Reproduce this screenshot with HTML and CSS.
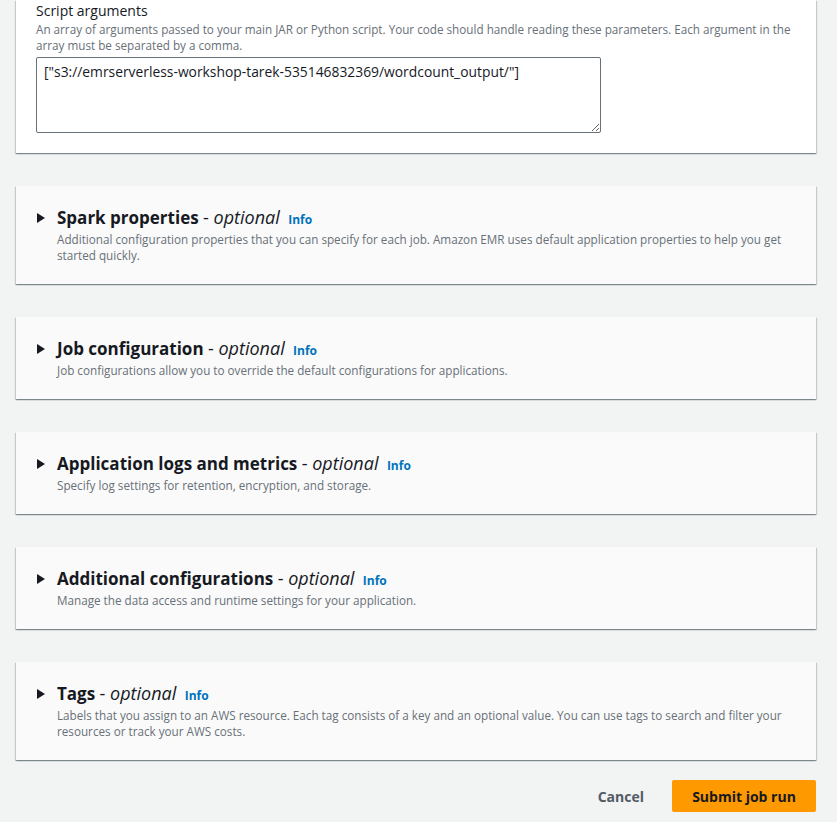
FILE: index.html
```html
<!DOCTYPE html>
<html lang="en">
<head>
<meta charset="utf-8">
<title>Submit job run</title>
<link rel="stylesheet" href="styles.css">
</head>
<body>
<main class="page">
  <section class="card card-open">
    <div class="field-label">Script arguments</div>
    <div class="field-desc">An array of arguments passed to your main JAR or Python script. Your code should handle reading these parameters. Each argument in the array must be separated by a comma.</div>
    <textarea class="textarea">["s3://emrserverless-workshop-tarek-535146832369/wordcount_output/"]</textarea>
  </section>

  <section class="card card-collapsed">
    <div class="exp-head">
      <span class="caret"><svg width="10" height="12" viewBox="0 0 10 12"><path d="M1 1 L9 6 L1 11 Z" fill="#16191f"/></svg></span>
      <div class="exp-text">
        <h2 class="exp-title">Spark properties <span class="opt">- <i>optional</i></span> <a class="info">Info</a></h2>
        <p class="exp-desc">Additional configuration properties that you can specify for each job. Amazon EMR uses default application properties to help you get started quickly.</p>
      </div>
    </div>
  </section>

  <section class="card card-collapsed">
    <div class="exp-head">
      <span class="caret"><svg width="10" height="12" viewBox="0 0 10 12"><path d="M1 1 L9 6 L1 11 Z" fill="#16191f"/></svg></span>
      <div class="exp-text">
        <h2 class="exp-title">Job configuration <span class="opt">- <i>optional</i></span> <a class="info">Info</a></h2>
        <p class="exp-desc">Job configurations allow you to override the default configurations for applications.</p>
      </div>
    </div>
  </section>

  <section class="card card-collapsed">
    <div class="exp-head">
      <span class="caret"><svg width="10" height="12" viewBox="0 0 10 12"><path d="M1 1 L9 6 L1 11 Z" fill="#16191f"/></svg></span>
      <div class="exp-text">
        <h2 class="exp-title">Application logs and metrics <span class="opt">- <i>optional</i></span> <a class="info">Info</a></h2>
        <p class="exp-desc">Specify log settings for retention, encryption, and storage.</p>
      </div>
    </div>
  </section>

  <section class="card card-collapsed">
    <div class="exp-head">
      <span class="caret"><svg width="10" height="12" viewBox="0 0 10 12"><path d="M1 1 L9 6 L1 11 Z" fill="#16191f"/></svg></span>
      <div class="exp-text">
        <h2 class="exp-title">Additional configurations <span class="opt">- <i>optional</i></span> <a class="info">Info</a></h2>
        <p class="exp-desc">Manage the data access and runtime settings for your application.</p>
      </div>
    </div>
  </section>

  <section class="card card-collapsed">
    <div class="exp-head">
      <span class="caret"><svg width="10" height="12" viewBox="0 0 10 12"><path d="M1 1 L9 6 L1 11 Z" fill="#16191f"/></svg></span>
      <div class="exp-text">
        <h2 class="exp-title">Tags <span class="opt">- <i>optional</i></span> <a class="info">Info</a></h2>
        <p class="exp-desc">Labels that you assign to an AWS resource. Each tag consists of a key and an optional value. You can use tags to search and filter your resources or track your AWS costs.</p>
      </div>
    </div>
  </section>

  <div class="actions">
    <button class="btn btn-link">Cancel</button>
    <button class="btn btn-primary">Submit job run</button>
  </div>
</main>
</body>
</html>
```

FILE: styles.css
```css
* { box-sizing: border-box; }
html, body {
  margin: 0;
  padding: 0;
  background: #f2f3f3;
  font-family: "Open Sans", "Noto Sans", sans-serif;
  color: #16191f;
}
.page {
  width: 800px;
  margin-left: 16px;
  display: flex;
  flex-direction: column;
  gap: 33px;
}
.card {
  background: #fafafa;
  box-shadow: 0 1px 1px 0 rgba(0,28,36,.3), 1px 1px 1px 0 rgba(0,28,36,.15), -1px 1px 1px 0 rgba(0,28,36,.15);
}
.card-open {
  background: #ffffff;
  padding: 2px 20px 20px;
  display: flex;
  flex-direction: column;
}
.field-label {
  font-size: 14px;
  line-height: 18px;
}
.field-desc {
  font-size: 11.7px;
  line-height: 16px;
  color: #687078;
  margin-top: 1px;
}
.textarea {
  margin-top: 4px;
  width: 565px;
  height: 76px;
  border: 1px solid #687078;
  border-radius: 2px;
  padding: 4px 7px;
  font-family: inherit;
  font-size: 13.85px;
  line-height: 20px;
  color: #16191f;
  background: #fff;
  resize: vertical;
}
.card-collapsed {
  padding: 22px 20px 21px;
}
.exp-head {
  display: flex;
  align-items: flex-start;
}
.caret {
  width: 21px;
  flex: none;
  height: 20px;
  display: flex;
  align-items: center;
}
.exp-title {
  margin: 0;
  font-size: 17px;
  line-height: 20px;
  height: 20px;
  font-weight: 700;
  color: #16191f;
}
.opt {
  font-weight: 400;
  font-size: 18px;
  line-height: 1;
}
.info {
  font-size: 12px;
  line-height: 1;
  font-weight: 700;
  color: #0073bb;
  margin-left: 4px;
}
.exp-desc {
  margin: 3px 0 0;
  font-size: 11.7px;
  line-height: 16px;
  color: #687078;
}
.actions {
  display: flex;
  justify-content: flex-end;
  align-items: center;
  gap: 8px;
  margin-top: -13px;
  margin-bottom: 10px;
}
.btn {
  height: 32px;
  border: none;
  border-radius: 2px;
  font-family: inherit;
  font-size: 14px;
  font-weight: 700;
  padding: 0 20px;
  background: transparent;
}
.btn-link {
  color: #545b64;
}
.btn-primary {
  background: #f90;
  color: #16191f;
  width: 144px;
}
```
